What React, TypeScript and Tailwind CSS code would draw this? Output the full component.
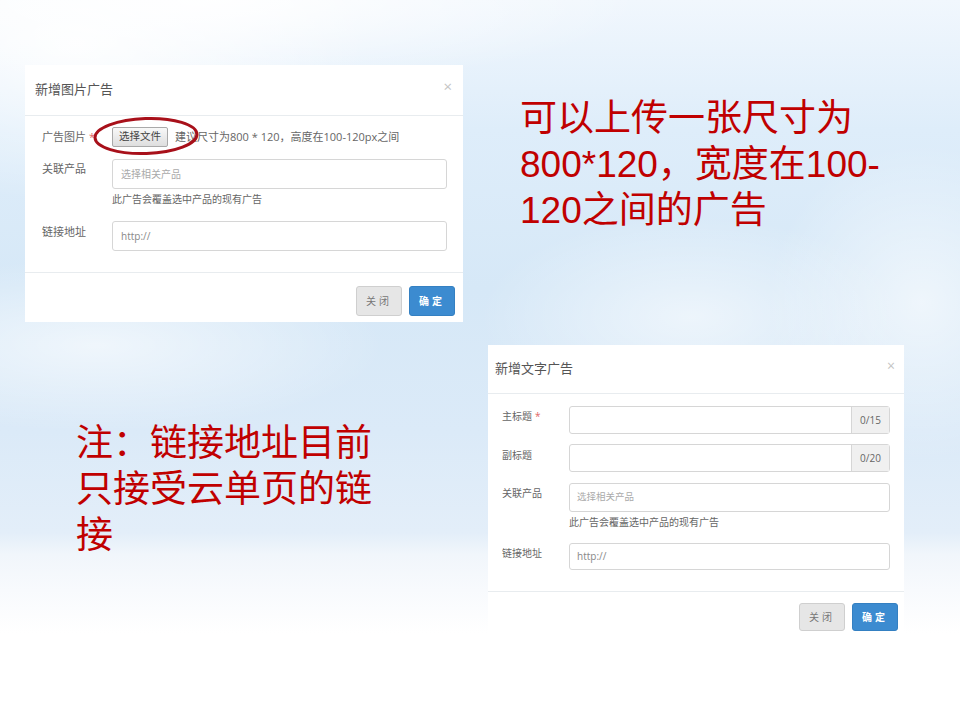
import { FunctionComponent } from "react";

const Star = () => <span className="text-[#e06666] ml-[3px]">*</span>;

const FooterButtons: FunctionComponent<{ h: string }> = ({ h }) => (
  <div className="flex gap-[7px]">
    <div
      className={`w-[46px] ${h} flex items-center justify-center bg-[#e6e6e6] border border-[#cfcfcf] rounded-[3px] text-[10px] tracking-[3px] text-[#777]`}
    >
      关闭
    </div>
    <div
      className={`w-[46px] ${h} flex items-center justify-center bg-[#3c8bd0] border border-[#3480c2] rounded-[3px] text-[10px] tracking-[3px] font-bold text-white`}
    >
      确定
    </div>
  </div>
);

const ImageAdDialog = () => (
  <div className="relative w-[438px] bg-white flex flex-col">
    <div className="h-[51px] flex items-center justify-between pl-[10px] pr-[11px] border-b border-[#e8ecef]">
      <div className="text-[13px] text-[#555]">新增图片广告</div>
      <div className="text-[15px] text-[#c4c4c4] -mt-[8px]">×</div>
    </div>
    <div className="flex flex-col pt-[11px] pl-[17px] pr-[16px] pb-[21px]">
      <div className="flex items-center h-[20px]">
        <div className="w-[70px] text-[11px] text-[#666]">
          广告图片
          <Star />
        </div>
        <div className="h-[20px] px-[6px] flex items-center bg-[linear-gradient(#f8f8f8,#dedede)] border border-[#a9a9a9] rounded-[2px] text-[10.5px] text-[#444]">
          选择文件
        </div>
        <div className="ml-[7px] text-[11px] text-[#666]">
          建议尺寸为800 * 120，高度在100-120px之间
        </div>
      </div>
      <div className="flex mt-[12px]">
        <div className="w-[70px] pt-[3px] text-[11px] leading-[14px] text-[#666]">
          关联产品
        </div>
        <div className="flex-1 flex flex-col">
          <div className="h-[30px] flex items-center pl-[8px] border border-[#d6d6d6] rounded-[3px] text-[10px] text-[#aaa]">
            选择相关产品
          </div>
          <div className="mt-[4px] text-[10px] leading-[12px] text-[#666]">
            此广告会覆盖选中产品的现有广告
          </div>
        </div>
      </div>
      <div className="flex mt-[16px]">
        <div className="w-[70px] pt-[4px] text-[11px] leading-[14px] text-[#666]">
          链接地址
        </div>
        <div className="flex-1 h-[30px] flex items-center pl-[8px] border border-[#d6d6d6] rounded-[3px] text-[10px] text-[#888]">
          http://
        </div>
      </div>
    </div>
    <div className="h-[50px] flex justify-end items-start pt-[13px] pr-[8px] border-t border-[#e8ecef]">
      <FooterButtons h="h-[30px]" />
    </div>
    <svg
      className="absolute left-[67px] top-[51px]"
      width="108"
      height="40"
      viewBox="0 0 108 40"
    >
      <ellipse
        cx="54"
        cy="20"
        rx="51"
        ry="17.5"
        fill="none"
        stroke="#a8101a"
        strokeWidth="3"
        transform="rotate(-2 54 20)"
      />
    </svg>
  </div>
);

const TextAdDialog = () => (
  <div className="w-[416px] bg-white flex flex-col">
    <div className="h-[49px] flex items-center justify-between pl-[7px] pr-[9px] border-b border-[#e8ecef]">
      <div className="text-[13px] text-[#555]">新增文字广告</div>
      <div className="text-[14px] text-[#c4c4c4] -mt-[8px]">×</div>
    </div>
    <div className="flex flex-col pt-[12px] pl-[14px] pr-[14px] pb-[21px]">
      <div className="flex">
        <div className="w-[67px] pt-[3px] text-[10px] leading-[14px] text-[#666]">
          主标题
          <Star />
        </div>
        <div className="flex-1 h-[28px] flex border border-[#d6d6d6] rounded-[3px]">
          <div className="flex-1"></div>
          <div className="w-[38px] flex items-center justify-center bg-[#f0f0f0] border-l border-[#d6d6d6] text-[10px] text-[#666]">
            0/15
          </div>
        </div>
      </div>
      <div className="flex mt-[10px]">
        <div className="w-[67px] pt-[4px] text-[10px] leading-[14px] text-[#666]">
          副标题
        </div>
        <div className="flex-1 h-[28px] flex border border-[#d6d6d6] rounded-[3px]">
          <div className="flex-1"></div>
          <div className="w-[38px] flex items-center justify-center bg-[#f0f0f0] border-l border-[#d6d6d6] text-[10px] text-[#666]">
            0/20
          </div>
        </div>
      </div>
      <div className="flex mt-[11px]">
        <div className="w-[67px] pt-[3px] text-[10px] leading-[14px] text-[#666]">
          关联产品
        </div>
        <div className="flex-1 flex flex-col">
          <div className="h-[29px] flex items-center pl-[7px] border border-[#d6d6d6] rounded-[3px] text-[9.5px] text-[#aaa]">
            选择相关产品
          </div>
          <div className="mt-[4px] text-[10px] leading-[12px] text-[#666]">
            此广告会覆盖选中产品的现有广告
          </div>
        </div>
      </div>
      <div className="flex mt-[15px]">
        <div className="w-[67px] pt-[3px] text-[10px] leading-[14px] text-[#666]">
          链接地址
        </div>
        <div className="flex-1 h-[27px] flex items-center pl-[7px] border border-[#d6d6d6] rounded-[3px] text-[10px] text-[#888]">
          http://
        </div>
      </div>
    </div>
    <div className="h-[49px] flex justify-end items-start pt-[11px] pr-[6px] border-t border-[#e8ecef]">
      <FooterButtons h="h-[28px]" />
    </div>
  </div>
);

export default function App() {
  return (
    <div className="w-[960px] h-[720px] overflow-hidden flex flex-col font-['Open_Sans','Noto_Sans_CJK_SC',sans-serif] [background-image:radial-gradient(ellipse_45%_12%_at_22%_0%,rgba(255,255,255,0.95),rgba(255,255,255,0)),radial-gradient(ellipse_30%_22%_at_8%_6%,rgba(255,255,255,0.9),rgba(255,255,255,0)),radial-gradient(ellipse_22%_14%_at_72%_44%,rgba(255,255,255,0.55),rgba(255,255,255,0)),radial-gradient(ellipse_16%_22%_at_96%_42%,rgba(255,255,255,0.6),rgba(255,255,255,0)),radial-gradient(ellipse_30%_12%_at_10%_48%,rgba(255,255,255,0.6),rgba(255,255,255,0)),linear-gradient(180deg,#f1f7fd_0%,#deedfa_18%,#d6e8f7_40%,#dbeaf8_60%,#e3eef9_74%,#f1f6fb_77%,#f8fafd_82%,#ffffff_88%)]">
      <div className="flex pt-[65px]">
        <div className="ml-[25px]">
          <ImageAdDialog />
        </div>
        <div className="ml-[57px] mt-[31px] text-[37px] leading-[46px] text-[#c00000] font-['Liberation_Sans','Noto_Sans_CJK_SC',sans-serif]">
          <div>可以上传一张尺寸为</div>
          <div>800*120，宽度在100-</div>
          <div>120之间的广告</div>
        </div>
      </div>
      <div className="flex mt-[23px]">
        <div className="ml-[76px] w-[330px] mt-[76px] text-[37px] leading-[46px] text-[#c00000] font-['Liberation_Sans','Noto_Sans_CJK_SC',sans-serif]">
          <div>注：链接地址目前</div>
          <div>只接受云单页的链</div>
          <div>接</div>
        </div>
        <div className="ml-[82px]">
          <TextAdDialog />
        </div>
      </div>
    </div>
  );
}
